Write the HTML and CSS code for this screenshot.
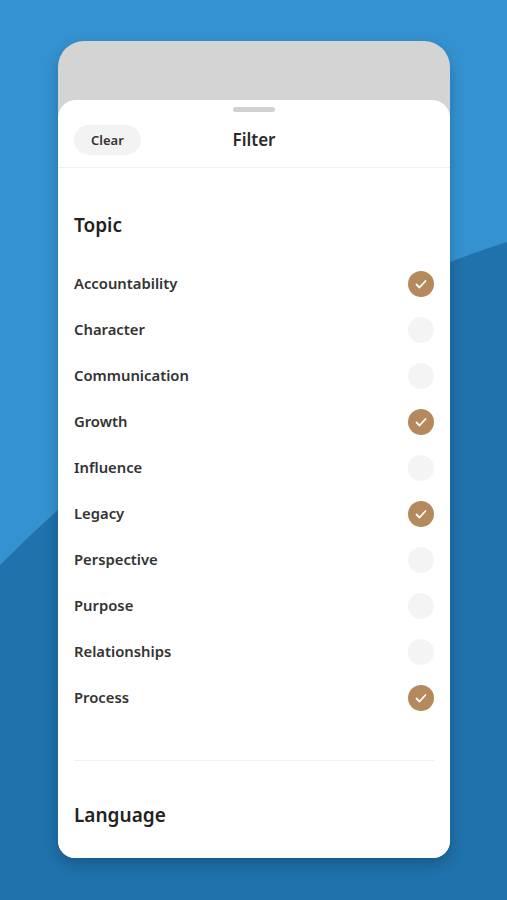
FILE: index.html
```html
<!DOCTYPE html>
<html>
<head>
<meta charset="utf-8">
<link rel="stylesheet" href="styles.css">
</head>
<body>
<svg class="bg" width="507" height="900" viewBox="0 0 507 900" aria-hidden="true">
  <rect width="507" height="900" fill="#3492d0"/>
  <path d="M0,565 Q237,328 507,242 L507,900 L0,900 Z" fill="#1f72ac"/>
</svg>
<div class="phone">
  <div class="top"></div>
  <div class="sheet">
    <div class="handle"></div>
    <div class="header">
      <button class="clear">Clear</button>
      <div class="title">Filter</div>
    </div>
    <div class="content">
      <h2 class="heading">Topic</h2>
      <ul class="list">
        <li class="row"><span>Accountability</span><span class="box on"><svg viewBox="0 0 26 26"><path d="M8.5 13.5l3 3 6-6.5"/></svg></span></li>
        <li class="row"><span>Character</span><span class="box"></span></li>
        <li class="row"><span>Communication</span><span class="box"></span></li>
        <li class="row"><span>Growth</span><span class="box on"><svg viewBox="0 0 26 26"><path d="M8.5 13.5l3 3 6-6.5"/></svg></span></li>
        <li class="row"><span>Influence</span><span class="box"></span></li>
        <li class="row"><span>Legacy</span><span class="box on"><svg viewBox="0 0 26 26"><path d="M8.5 13.5l3 3 6-6.5"/></svg></span></li>
        <li class="row"><span>Perspective</span><span class="box"></span></li>
        <li class="row"><span>Purpose</span><span class="box"></span></li>
        <li class="row"><span>Relationships</span><span class="box"></span></li>
        <li class="row"><span>Process</span><span class="box on"><svg viewBox="0 0 26 26"><path d="M8.5 13.5l3 3 6-6.5"/></svg></span></li>
      </ul>
      <div class="divider"></div>
      <h2 class="heading lang">Language</h2>
    </div>
  </div>
</div>
</body>
</html>
```
FILE: styles.css
```css
html, body {
  margin: 0;
  padding: 0;
}
body {
  width: 507px;
  height: 900px;
  overflow: hidden;
  position: relative;
  font-family: "Noto Sans", "Open Sans", sans-serif;
  color: #2b2b2b;
}
.bg {
  position: absolute;
  left: 0;
  top: 0;
  z-index: 0;
}
.phone {
  position: relative;
  z-index: 1;
  margin: 41px 0 0 58px;
  width: 392px;
  height: 817px;
  border-radius: 26px 26px 17px 17px;
  overflow: hidden;
  background: #d4d4d4;
  display: flex;
  flex-direction: column;
  box-shadow: 0 6px 14px rgba(0, 0, 0, 0.22);
}
.top {
  height: 59px;
  flex: none;
}
.sheet {
  flex: 1;
  background: #fff;
  border-radius: 18px 18px 0 0;
  display: flex;
  flex-direction: column;
}
.handle {
  width: 42px;
  height: 5px;
  border-radius: 3px;
  background: #d2d2d2;
  margin: 7px auto 0;
}
.header {
  height: 55px;
  position: relative;
  display: flex;
  align-items: center;
  justify-content: center;
  border-bottom: 1px solid #f1f1f1;
}
.clear {
  position: absolute;
  left: 16px;
  top: 13px;
  height: 30px;
  padding: 0 17px;
  border: none;
  border-radius: 15px;
  background: #f3f3f3;
  font-family: inherit;
  font-size: 13px;
  font-weight: 600;
  color: #333;
}
.title {
  font-size: 17px;
  font-weight: 600;
  color: #2a2a2a;
}
.content {
  padding: 43px 16px 0 16px;
}
.heading {
  margin: 0;
  font-size: 19px;
  line-height: 28px;
  font-weight: 600;
  color: #222;
}
.list {
  list-style: none;
  margin: 21px 0 0;
  padding: 0;
}
.row {
  height: 46px;
  display: flex;
  align-items: center;
  justify-content: space-between;
  font-size: 14.8px;
  font-weight: 600;
  color: #333;
}
.box {
  width: 26px;
  height: 26px;
  margin-top: 1px;
  border-radius: 50%;
  background: #f4f4f4;
  display: flex;
}
.box.on {
  background: #b4895c;
}
.box svg {
  width: 26px;
  height: 26px;
}
.box path {
  fill: none;
  stroke: #fff;
  stroke-width: 1.8;
  stroke-linecap: round;
  stroke-linejoin: round;
}
.divider {
  margin-top: 40px;
  height: 1px;
  background: #f1f1f1;
}
.lang {
  margin-top: 40px;
}
```
